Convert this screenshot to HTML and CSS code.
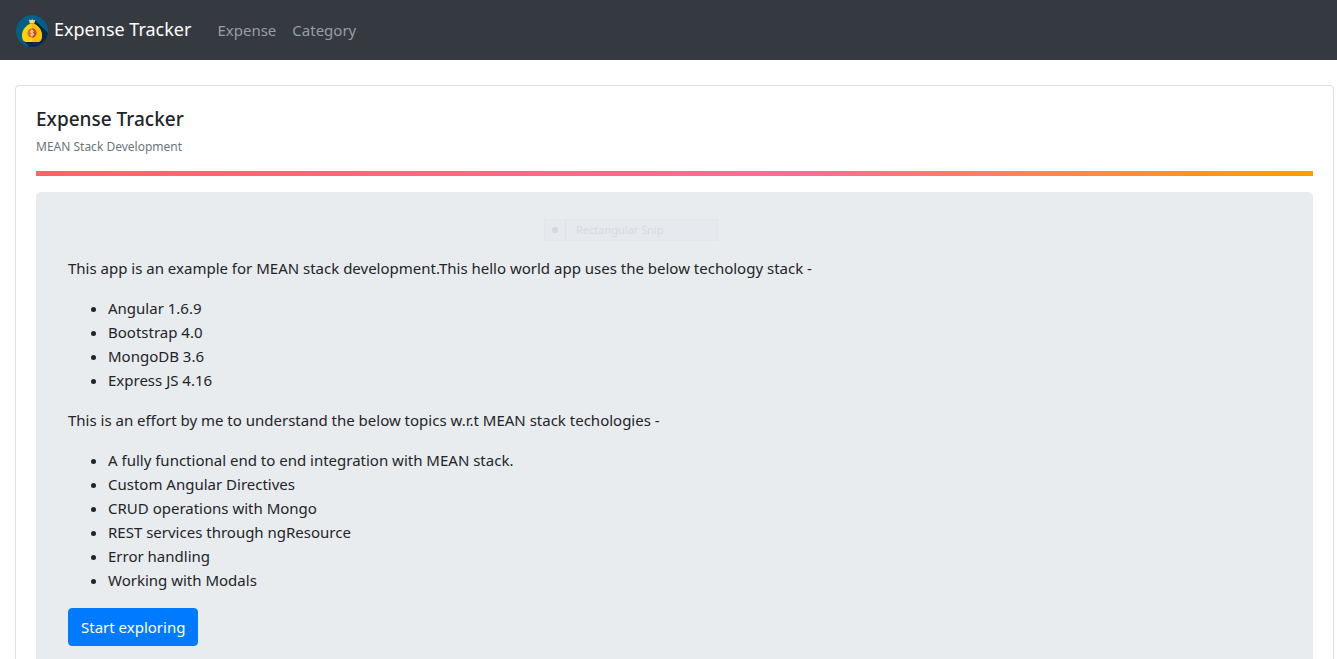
FILE: index.html
```html
<!DOCTYPE html>
<html lang="en">
<head>
<meta charset="utf-8">
<meta name="viewport" content="width=device-width, initial-scale=1">
<title>Expense Tracker</title>
<link rel="stylesheet" href="styles.css">
</head>
<body class="page">
<nav class="navbar">
  <a class="brand" href="#">
    <svg class="brand-logo" viewBox="0 0 32 32" aria-hidden="true">
      <defs><clipPath id="disc"><circle cx="16" cy="16" r="16"/></clipPath></defs>
      <g clip-path="url(#disc)">
        <rect width="32" height="32" fill="#025f86"/>
        <path d="M19 5L34 20V34H15L8 26Z" fill="#042a46"/>
        <path d="M12.8 4.6L15 5.3L16.2 4.3L17.5 5.3L19.4 4.7L17.8 9.5H14.2Z" fill="#f6d88a"/>
        <path d="M14 8.500H18C20 10 26 13 26 20.500C26 25 24 27 21.500 27H10.500C8 27 6 25 6 20.500C6 13 12 10 14 8.500Z" fill="#fed402"/>
        <path d="M16 8.500H18C20 10 26 13 26 20.500C26 25 24 27 21.500 27H16Z" fill="#fdbd00"/>
        <rect x="14" y="8" width="4" height="1" rx=".5" fill="#e98a3f"/>
        <circle cx="16" cy="18" r="4.500" fill="#d9693b"/>
        <path d="M16 13.500A4.500 4.500 0 0 1 16 22.500Z" fill="#bd4c32"/>
        <path d="M17.800 16.500C17 15.400 14.300 15.500 14.400 16.900C14.500 18.300 17.700 17.600 17.700 19.200C17.700 20.600 14.900 20.600 14.100 19.500M16 14.700V21.400" fill="none" stroke="#ffe0a3" stroke-width="1"/>
      </g>
    </svg>
    <span>Expense Tracker</span>
  </a>
  <div class="nav-links">
    <a class="nav-link" href="#">Expense</a>
    <a class="nav-link" href="#">Category</a>
  </div>
</nav>
<main class="content">
  <section class="card">
    <h1 class="card-title">Expense Tracker</h1>
    <p class="card-subtitle">MEAN Stack Development</p>
    <div class="divider"></div>
    <div class="jumbotron">
      <div class="snip"><span class="snip-mark"><span class="snip-dot"></span></span><span class="snip-label">Rectangular Snip</span></div>
      <p class="text">This app is an example for MEAN stack development.This hello world app uses the below techology stack -</p>
      <ul class="list">
        <li>Angular 1.6.9</li>
        <li>Bootstrap 4.0</li>
        <li>MongoDB 3.6</li>
        <li>Express JS 4.16</li>
      </ul>
      <p class="text">This is an effort by me to understand the below topics w.r.t MEAN stack techologies -</p>
      <ul class="list">
        <li>A fully functional end to end integration with MEAN stack.</li>
        <li>Custom Angular Directives</li>
        <li>CRUD operations with Mongo</li>
        <li>REST services through ngResource</li>
        <li>Error handling</li>
        <li>Working with Modals</li>
      </ul>
      <button class="btn" type="button">Start exploring</button>
    </div>
  </section>
</main>
</body>
</html>
```
FILE: styles.css
```css
* { box-sizing: border-box; }
.page {
  margin: 0;
  background: #fff;
  color: #212529;
  font: 15px/24px "Noto Sans", "Open Sans", sans-serif;
}
.navbar {
  display: flex;
  align-items: center;
  gap: 18px;
  padding: 8px 16px;
  background: #343a40;
}
.brand {
  display: flex;
  gap: 6px;
  padding: 7px 0 5px;
  color: #fff;
  font-size: 18px;
  line-height: 28px;
  text-decoration: none;
}
.brand-logo { width: 32px; height: 32px; }
.nav-links { display: flex; }
.nav-link {
  padding: 8px;
  color: #9a9da0;
  text-decoration: none;
}
.content { padding: 25px 3px 20px 15px; }
.card {
  padding: 20px;
  border: 1px solid #dfdfdf;
  border-radius: 4px;
}
.card-title {
  margin: 0 0 4px;
  font-size: 19px;
  font-weight: 500;
  line-height: 26px;
}
.card-subtitle {
  margin: 0 0 14px;
  color: #6c757d;
  font-size: 12px;
  line-height: 21px;
}
.divider {
  height: 5px;
  margin-bottom: 16px;
  background: linear-gradient(to right, #ff6464 0%, #ff6c96 60%, #ff9d00 100%);
}
.jumbotron {
  position: relative;
  padding: 64px 32px;
  border-radius: 5px;
  background: #e9ecef;
}
.text { margin: 0 0 16px; }
.list { margin: 0 0 16px; padding-left: 40px; }
.btn {
  padding: 6px 12px;
  border: 1px solid #007bff;
  border-radius: 4px;
  background: #007bff;
  color: #fff;
  font: inherit;
}
.snip {
  position: absolute;
  top: 27px;
  left: 508px;
  display: flex;
  width: 174px;
  height: 22px;
  border: 1px solid #dfe6ef;
  background: #e6eaee;
  color: #d7dadd;
  font-size: 11px;
  line-height: 20px;
}
.snip-mark {
  display: grid;
  place-items: center;
  width: 21px;
  border-right: 1px solid #d5e4ef;
}
.snip-dot {
  width: 6px;
  height: 6px;
  border-radius: 50%;
  background: #d5d8db;
}
.snip-label { padding-left: 10px; }
```
